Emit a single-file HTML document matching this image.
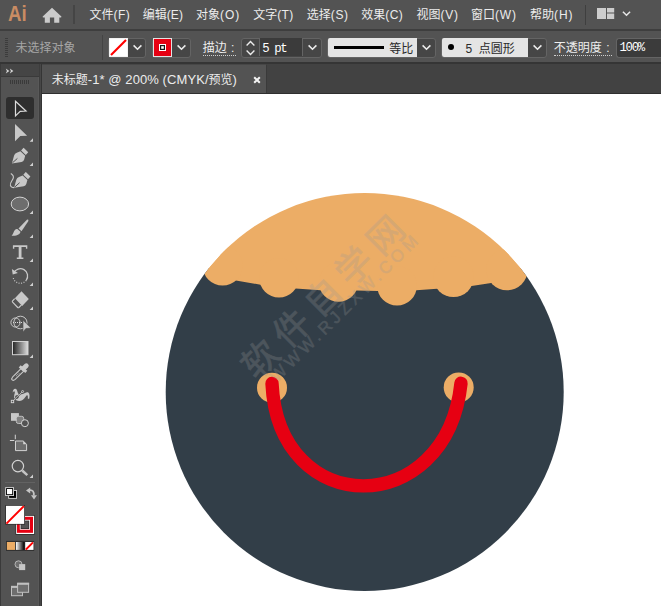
<!DOCTYPE html>
<html><head><meta charset="utf-8"><title>Adobe Illustrator</title>
<style>
html,body{margin:0;padding:0}
body{width:661px;height:606px;overflow:hidden;background:#fff;position:relative;
 font-family:"Liberation Sans","Noto Sans CJK SC",sans-serif;font-size:12px;color:#e4e4e4}
.cj{display:inline-block;font-family:"Liberation Sans","Noto Sans CJK SC",sans-serif;font-size:12px}
.a{position:absolute;white-space:nowrap}
#menubar{position:absolute;left:0;top:0;width:661px;height:29px;background:#535353}
#menubar .mi{position:absolute;top:7px;line-height:16px;white-space:nowrap;color:#ececec}
#sep1{position:absolute;left:0;top:29px;width:661px;height:2px;background:#3e3e3e}
#ctrl{position:absolute;left:0;top:31px;width:661px;height:32px;background:#535353}
#sep2{position:absolute;left:0;top:62px;width:661px;height:2px;background:#353535}
#tabs{position:absolute;left:0;top:64px;width:661px;height:30px;background:#424242}
#tab{position:absolute;left:42px;top:0;width:225px;height:30px;background:#535353;border-right:1px solid #3a3a3a;border-top:1px solid #474747;box-sizing:border-box}
#tools{position:absolute;left:0;top:64px;width:42px;height:542px;background:#535353}
.dd{position:absolute;top:6.5px;height:18px;box-sizing:content-box;border:1px solid #646464;background:#464646;border-radius:3px}
.lbl{position:absolute;top:9px;line-height:16px;color:#eeeeee;white-space:nowrap}
.mono{font-family:"Liberation Mono",monospace}
</style></head><body>

<!-- ===== menu bar ===== -->
<div id="menubar">
 <div class="a" style="left:8px;top:0px;font-weight:bold;font-size:22px;line-height:27px;color:#c98c63;transform:scaleX(0.85);transform-origin:0 0">Ai</div>
 <svg class="a" style="left:40px;top:0" width="24" height="29" viewBox="40 0 24 29"><path fill="#cbcbcb" d="M52 7.7L61.4 16.5Q61.7 17.4 60.6 17.4H59.3V22.8H54.2V17.6H49.9V22.8H44.8V17.4H43.4Q42.4 17.4 42.7 16.5Z"/></svg>
 <div class="a" style="left:73.3px;top:5px;width:1.5px;height:19px;background:#454545"></div>
 <div class="mi" style="left:89.5px"><span class="cj">文件</span><span style="letter-spacing:0.4px">(F)</span></div>
 <div class="mi" style="left:142.7px"><span class="cj">编辑</span><span style="letter-spacing:0.15px">(E)</span></div>
 <div class="mi" style="left:196px"><span class="cj">对象</span><span style="letter-spacing:1.0px">(O)</span></div>
 <div class="mi" style="left:253.2px"><span class="cj">文字</span><span style="letter-spacing:0.4px">(T)</span></div>
 <div class="mi" style="left:306.7px"><span class="cj">选择</span><span style="letter-spacing:0.7px">(S)</span></div>
 <div class="mi" style="left:361.2px"><span class="cj">效果</span><span style="letter-spacing:0.45px">(C)</span></div>
 <div class="mi" style="left:416.6px"><span class="cj">视图</span><span style="letter-spacing:0.7px">(V)</span></div>
 <div class="mi" style="left:471.1px"><span class="cj">窗口</span><span style="letter-spacing:0.75px">(W)</span></div>
 <div class="mi" style="left:530.1px"><span class="cj">帮助</span><span style="letter-spacing:0.9px">(H)</span></div>
 <div class="a" style="left:585px;top:5px;width:1px;height:20px;background:#3f3f3f"></div>
 <svg class="a" style="left:597px;top:8px" width="18" height="11" viewBox="0 0 18 11"><path fill="#cdcdcd" d="M0 0H9V11H0ZM10 0H17.2V4.5H10ZM10 5.6H17.2V11H10Z"/></svg>
 <svg class="a" style="left:621px;top:10px" width="11" height="8" viewBox="0 0 11 8"><path fill="none" stroke="#e6e6e6" stroke-width="1.5" d="M1.9 1.8L5.5 5.3L9.1 1.8"/></svg>
</div>
<div id="sep1"></div>

<!-- ===== control bar ===== -->
<div id="ctrl">
 <svg class="a" style="left:4px;top:7px" width="5" height="19" viewBox="0 0 5 19"><path stroke="#3c3c3c" stroke-width="1" d="M1 .5H4M1 2.5H4M1 4.5H4M1 6.5H4M1 8.5H4M1 10.5H4M1 12.5H4M1 14.5H4M1 16.5H4M1 18.5H4"/></svg>
 <div class="lbl" style="left:15.5px;color:#a6a6a6"><span class="cj">未选择对象</span></div>
 <div class="a" style="left:101.5px;top:4px;width:1px;height:25px;background:#444"></div>

 <!-- fill -->
 <div class="dd" style="left:108px;width:36px"></div>
 <svg class="a" style="left:109px;top:7px" width="19" height="19" viewBox="0 0 19 19"><rect width="19" height="19" fill="#e6e6e6"/><rect x="0.5" y="0.5" width="18" height="18" fill="#fff"/><path stroke="#f00" stroke-width="2.2" d="M2 17L17 2"/></svg>
 <svg class="a" style="left:132px;top:13px" width="11" height="8" viewBox="0 0 11 8"><path fill="none" stroke="#ececec" stroke-width="1.6" d="M1.6 1.4L5.5 5.2L9.4 1.4"/></svg>

 <!-- stroke -->
 <div class="dd" style="left:152px;width:36.5px"></div>
 <svg class="a" style="left:153px;top:7px" width="19" height="19" viewBox="0 0 19 19"><rect width="19" height="19" fill="#e2e2e2"/><rect x="1" y="1" width="17" height="17" fill="#e60012"/><rect x="6" y="6" width="7" height="7" fill="#fff"/><rect x="7" y="7" width="5" height="5" fill="#1a1a1a"/><rect x="8.2" y="8.2" width="2.6" height="2.6" fill="#fff"/></svg>
 <svg class="a" style="left:176px;top:13px" width="11" height="8" viewBox="0 0 11 8"><path fill="none" stroke="#ececec" stroke-width="1.6" d="M1.6 1.4L5.5 5.2L9.4 1.4"/></svg>

 <!-- stroke weight -->
 <div class="lbl" style="left:202.7px;border-bottom:1px dotted #cfcfcf;line-height:14px;top:9.5px"><span class="cj">描边</span>&nbsp;<span style="margin-left:1px;padding-right:2px">:</span></div>
 <div class="dd" style="left:241px;width:79px"></div>
 <div class="a" style="left:259px;top:7px;width:44px;height:18px;background:#3b3b3b;border-left:1px solid #646464;border-right:1px solid #646464;box-sizing:border-box"></div>
 <svg class="a" style="left:245px;top:9px" width="11" height="16" viewBox="0 0 11 16"><path fill="none" stroke="#ececec" stroke-width="1.4" d="M1.6 5.4L5.5 1.6L9.4 5.4M1.6 10.6L5.5 14.4L9.4 10.6"/></svg>
 <div class="a mono" style="left:262.2px;top:9.8px;line-height:16px;font-size:12.3px;color:#fff;letter-spacing:-1.35px">5 pt</div>
 <svg class="a" style="left:307px;top:13px" width="11" height="8" viewBox="0 0 11 8"><path fill="none" stroke="#ececec" stroke-width="1.6" d="M1.6 1.4L5.5 5.2L9.4 1.4"/></svg>

 <!-- profile -->
 <div class="dd" style="left:327px;width:107px"></div>
 <div class="a" style="left:328px;top:7px;width:89px;height:19px;background:#e4e4e4;border-radius:2px 0 0 2px"></div>
 <div class="a" style="left:334px;top:15.3px;width:50px;height:3px;background:#000"></div>
 <div class="a" style="left:389.3px;top:9.5px;line-height:16px;color:#2a2a2a"><span class="cj">等比</span></div>
 <svg class="a" style="left:420.5px;top:13px" width="11" height="8" viewBox="0 0 11 8"><path fill="none" stroke="#ececec" stroke-width="1.6" d="M1.6 1.4L5.5 5.2L9.4 1.4"/></svg>

 <!-- brush -->
 <div class="dd" style="left:441px;width:104px"></div>
 <div class="a" style="left:442px;top:7px;width:86px;height:19px;background:#e4e4e4;border-radius:2px 0 0 2px"></div>
 <div class="a" style="left:448.4px;top:13.4px;width:6px;height:6px;border-radius:50%;background:#000"></div>
 <div class="a" style="left:465.5px;top:9.5px;line-height:16px;color:#2a2a2a">5&nbsp;&nbsp;<span class="cj">点圆形</span></div>
 <svg class="a" style="left:531.5px;top:13px" width="11" height="8" viewBox="0 0 11 8"><path fill="none" stroke="#ececec" stroke-width="1.6" d="M1.6 1.4L5.5 5.2L9.4 1.4"/></svg>

 <!-- opacity -->
 <div class="lbl" style="left:553.8px;border-bottom:1px dotted #cfcfcf;line-height:14px;top:9.5px"><span class="cj">不透明度</span>&nbsp;<span style="margin-left:1px;padding-right:2px">:</span></div>
 <div class="dd" style="left:616px;width:44px;background:#3b3b3b;border-right:0;border-radius:3px 0 0 3px"></div>
 <div class="a mono" style="left:619.4px;top:9px;line-height:16px;font-size:12.3px;color:#fff;letter-spacing:-1.25px">100%</div>
</div>
<div id="sep2"></div>

<!-- ===== tab strip ===== -->
<div id="tabs">
 <div class="a" style="left:42px;top:29px;width:619px;height:1px;background:#2f2f2f;z-index:2"></div>
 <div id="tab">
  <div class="a" style="left:9.8px;top:6.4px;line-height:18px;font-size:13px;letter-spacing:0.08px;color:#ececec"><span class="cj" style="letter-spacing:0">未标题</span>-1* @ 200% (CMYK/<span class="cj" style="letter-spacing:0">预览</span>)</div>
  <svg class="a" style="left:211.3px;top:10.5px" width="8" height="8" viewBox="0 0 8 8"><path stroke="#f4f4f4" stroke-width="2" d="M1.2 1.2L6.8 6.8M6.8 1.2L1.2 6.8"/></svg>
 </div>
</div>

<!-- ===== tools ===== -->
<div id="tools">
 <svg class="a" style="left:0;top:0" width="42" height="542" viewBox="0 64 42 542">
  <rect x="0" y="64" width="1" height="542" fill="#3a3a3a"/>
  <rect x="38" y="77" width="1" height="529" fill="#595959"/><rect x="39" y="64" width="1" height="542" fill="#3d3d3d"/><rect x="40" y="64" width="1" height="542" fill="#474747"/><rect x="41" y="64" width="1" height="542" fill="#353535"/>
  <rect x="1" y="64" width="38" height="12" fill="#454545"/>
  <rect x="1" y="76" width="38" height="1" fill="#3a3a3a"/>
  <path fill="#d6d6d6" d="M5.8 68.4L9.4 70.9L5.8 73.4L6.9 70.9ZM9.8 68.4L13.4 70.9L9.8 73.4L10.9 70.9Z"/>
  <path stroke="#3a3a3a" stroke-width="1" d="M10.5 80V84M12.5 80V84M14.5 80V84M16.5 80V84M18.5 80V84M20.5 80V84M22.5 80V84M24.5 80V84M26.5 80V84M28.5 80V84"/>
  <rect x="6" y="97" width="28" height="22" rx="3" fill="#2e2e2e"/>
  <!--TOOLS-BEGIN-->
<defs><linearGradient id="gt" x1="0" x2="1" y1="0" y2="0"><stop offset="0" stop-color="#222"/><stop offset="1" stop-color="#dedede"/></linearGradient><linearGradient id="gw" x1="0" x2="1" y1="0" y2="0"><stop offset="0" stop-color="#fff"/><stop offset="1" stop-color="#000"/></linearGradient><style>.fl{fill:#d0d0d0}</style></defs>
  <!-- 1 selection -->
  <path d="M15.5 101.3L26 111L20.2 111.3L15.5 115.9Z" fill="#2e2e2e" stroke="#dcdcdc" stroke-width="1.2" stroke-linejoin="miter"/>
  <!-- 2 direct selection -->
  <path d="M15 124L27.1 135.8L20.3 136L15 141.3Z" fill="#c8c8c8"/>
  <path class="fl" d="M33 138.2V141.7H29.6Z"/>
  <!-- 3 pen -->
  <g id="pen" fill="#c8c8c8">
   <path d="M21.1 150.5L23.3 147.9Q23.6 147.6 23.9 147.9L28 151.9Q28.3 152.2 28 152.5L25.8 155Z"/>
   <path d="M11.9 163.4L14.1 155.4Q14.8 153.4 16.8 152.8L20.4 151.2L25.2 155.7L24.1 159.7Q23.4 161.5 21.5 161.9Z"/>
   <path d="M12.4 162.9L17.4 158.4" stroke="#535353" stroke-width="1" fill="none"/>
  </g>
  <path class="fl" d="M33 162.6V166.1H29.6Z"/>
  <!-- 4 curvature -->
  <use href="#pen" x="2.2" y="24.3"/>
  <path d="M10.8 173.4C13.2 174.8 13.9 176.2 13.2 178.2C12.2 181 9.8 183 10.4 185.3C10.9 187 12.6 187.6 14.2 187.6" fill="none" stroke="#c8c8c8" stroke-width="1.1"/>
  <!-- 5 ellipse -->
  <ellipse cx="19.9" cy="204" rx="8.7" ry="6.9" fill="#6d6d6d" stroke="#d2d2d2" stroke-width="1"/>
  <path class="fl" d="M33 210.6V214.1H29.6Z"/>
  <!-- 6 brush -->
  <path fill="#c8c8c8" d="M26.9 219.7Q28.7 219.1 28.4 221L21.5 231.2L18.5 228.5Z"/>
  <path fill="#c8c8c8" d="M17.9 229.4L20.5 231.8C20.2 234.4 17 236.2 11.6 235.7C13.6 234.2 13.4 231.4 14.9 230C15.9 229 17.1 228.9 17.9 229.4Z"/>
  <path class="fl" d="M33 234.5V238H29.6Z"/>
  <!-- 7 type -->
  <path fill="#c8c8c8" d="M12.9 245.3H27.3V248.7H25.9V247H21.5V257.4H23.4V259H16.8V257.4H18.7V247H14.3V248.7H12.9Z"/>
  <path class="fl" d="M33 258.6V262.1H29.6Z"/>
  <!-- 8 rotate -->
  <path d="M13.63 273.03A7.3 7.3 0 1 1 26.2 280.29" fill="none" stroke="#c8c8c8" stroke-width="1.3"/>
  <path d="M26.2 280.29A7.3 7.3 0 0 1 13.25 277.89" fill="none" stroke="#c8c8c8" stroke-width="1.2" stroke-dasharray="1 1.5"/>
  <path fill="#c8c8c8" d="M11.9 269.1L12.7 274.4L17.9 273Z"/>
  <path class="fl" d="M33 282.5V286H29.6Z"/>
  <!-- 9 eraser -->
  <path fill="#c8c8c8" d="M21.5 291.2L28.8 298.9L22.2 306L14.9 298.3Z"/>
  <path fill="none" stroke="#c8c8c8" stroke-width="1.2" stroke-linejoin="round" d="M14.7 298.6L12.6 300.9Q12.1 301.5 12.6 302.1L17.7 307.5Q18.3 308 18.9 307.5L21.5 304.9"/>
  <path class="fl" d="M33 306.6V310.1H29.6Z"/>
  <!-- 10 shape builder -->
  <ellipse cx="20.4" cy="322.5" rx="6.6" ry="6.3" fill="none" stroke="#c8c8c8" stroke-width="1"/>
  <circle cx="15.5" cy="322.5" r="4.6" fill="none" stroke="#c8c8c8" stroke-width="1"/>
  <path d="M13 322.5H22.5" stroke="#dadada" stroke-width="1" stroke-dasharray="1 1"/>
  <path d="M23 320.2L31 328.1L25.9 328.5L23 332Z" fill="#c8c8c8" stroke="#535353" stroke-width="0.6"/>
  <!-- 11 gradient -->
  <rect x="12.5" y="341.5" width="15.5" height="13.2" fill="url(#gt)" stroke="#d2d2d2" stroke-width="1"/>
  <path class="fl" d="M33 354.6V358.1H29.6Z"/>
  <!-- 12 eyedropper -->
  <path d="M23.4 368.5L26.3 365.7" stroke="#c8c8c8" stroke-width="4.8" stroke-linecap="round" fill="none"/><path d="M19.7 366.3L26.3 371.8" stroke="#c8c8c8" stroke-width="3" fill="none"/><path d="M18.2 372.6L19.4 373.8M17 373.8L18.2 375M15.8 375L17 376.2" stroke="#c8c8c8" stroke-width="0.7" fill="none"/>
  <path fill="none" stroke="#c8c8c8" stroke-width="1.1" stroke-linejoin="round" d="M21.3 368.3L12.7 376.8Q11.1 378.6 12.2 379.8Q13.4 381 15.2 379.4L24 370.9"/>
  <!-- 13 puppet warp -->
  <path fill="#c8c8c8" d="M12.8 392.8C12.6 390.6 13.6 388.8 15.2 388.8C16.7 388.8 17.3 391 17.9 392.9C18.3 393.9 19 394.4 20 394.3C21.8 394.2 23.6 393.9 25 393C26.2 392.2 27.4 391.8 28.4 392.6C29.8 393.8 29.8 396.6 29.1 399L27.8 398.6C28 397 27.9 395.6 27.3 395.3C26.4 395 25.4 397.4 24.2 398.6C22.8 400 21.6 400.9 19.5 401C17.4 401.1 15.2 400.2 14.4 398.6C13.8 397.2 14.2 395.6 14.4 394.2C14.9 393.2 15.2 391.5 14.2 391.2C13.5 391.1 13.2 392.1 12.8 392.8Z"/>
  <path d="M12.6 401.5L22.6 391.5" stroke="#535353" stroke-width="1.6"/>
  <path d="M12.6 401.5L22.6 391.5" stroke="#d6d6d6" stroke-width="0.8"/>
  <rect x="11.3" y="400.3" width="2.4" height="2.4" fill="#535353" stroke="#d6d6d6" stroke-width="0.9"/>
  <circle cx="16.9" cy="396.9" r="1.5" fill="#4a4a4a" stroke="#4a4a4a" stroke-width="0.6"/><path d="M15.7 398.1L18.1 395.7" stroke="#d6d6d6" stroke-width="0.8"/>
  <circle cx="22.6" cy="391.5" r="1" fill="#535353" stroke="#d6d6d6" stroke-width="0.8"/>
  <!-- 14 shaper -->
  <rect x="11" y="413.1" width="7.9" height="7.7" fill="#c8c8c8"/>
  <rect x="16.3" y="416.3" width="7.4" height="7.2" rx="2" fill="#808080" stroke="#c8c8c8" stroke-width="0.9"/>
  <circle cx="24.9" cy="423.2" r="3.5" fill="#535353" stroke="#d2d2d2" stroke-width="1"/>
  <!-- 15 artboard -->
  <path d="M15.3 434.7V439.2M9.9 440.5H14.3" stroke="#d2d2d2" stroke-width="1" fill="none"/>
  <path d="M15.5 441H23.2L26.6 444.3V450.6H15.5Z" fill="#6e6e6e" stroke="#d2d2d2" stroke-width="1"/>
  <path d="M23.2 441L26.6 444.3H23.2Z" fill="#d2d2d2"/>
  <!-- 16 zoom -->
  <circle cx="17.9" cy="466.1" r="5.7" fill="none" stroke="#d2d2d2" stroke-width="1.2"/>
  <path d="M22.2 470.5L27.3 475.2" stroke="#c4c4c4" stroke-width="2.4"/>
  <path class="fl" d="M33 474.5V478H29.6Z"/>
  <!-- separator -->
  <rect x="5" y="482" width="30" height="1" fill="#626262"/>
  <!-- default fill/stroke -->
  <rect x="8.2" y="490" width="8.8" height="8.8" fill="#d8d8d8"/><rect x="9.1" y="490.9" width="7" height="7" fill="#000"/>
  <rect x="5.2" y="487.2" width="8.8" height="8.8" fill="#d8d8d8"/><rect x="6.1" y="488.1" width="7" height="7" fill="#000"/><rect x="7" y="489" width="5.2" height="5.2" fill="#fff"/>
  <!-- swap -->
  <path d="M29.2 490.2C32.8 489.6 34.2 492 33.8 495.4" fill="none" stroke="#c4c4c4" stroke-width="1.8"/>
  <path fill="#c4c4c4" d="M26 490.6L30.2 487.4V493.4ZM31 495.2H37L34 499.4Z"/>
  <!-- stroke box -->
  <rect x="15.5" y="515" width="19.2" height="19.7" fill="#2a2a2a"/>
  <rect x="16.2" y="515.8" width="17.9" height="18.2" fill="#fff"/>
  <rect x="17" y="516.8" width="16" height="16" fill="#e60012"/>
  <rect x="19.8" y="519.8" width="10.2" height="9.9" fill="#fff"/>
  <rect x="20.6" y="520.6" width="8.6" height="8.4" fill="#2a2a2a"/>
  <rect x="21.3" y="521.3" width="7.2" height="7" fill="#535353"/>
  <!-- fill box -->
  <rect x="5.3" y="505" width="19.7" height="19.6" fill="#2a2a2a"/>
  <rect x="6" y="505.8" width="18.2" height="18.1" fill="#fff"/>
  <path d="M6.4 523.6L23.9 506.1" stroke="#f00" stroke-width="2"/>
  <!-- color / gradient / none -->
  <rect x="6" y="540.9" width="28.2" height="10" fill="#2f2f2f"/>
  <rect x="6.9" y="542" width="8.1" height="7.9" fill="#ecad66"/>
  <rect x="15.9" y="542" width="8.4" height="7.9" fill="url(#gw)"/>
  <rect x="25.2" y="542" width="8.3" height="7.9" fill="#fff"/>
  <path d="M25.8 549.6L33 542.4" stroke="#f00" stroke-width="2"/>
  <!-- draw mode -->
  <circle cx="18.5" cy="564.3" r="3.5" fill="#6e6e6e" stroke="#bdbdbd" stroke-width="0.9"/>
  <rect x="19.1" y="564.1" width="6.1" height="6" fill="#c6c6c6"/>
  <!-- screen mode -->
  <rect x="11.5" y="586.4" width="11" height="9.3" fill="#6e6e6e" stroke="#c0c0c0" stroke-width="1"/>
  <rect x="11" y="585.9" width="12" height="2" fill="#c0c0c0"/>
  <rect x="17.6" y="583.3" width="11" height="9" fill="#6e6e6e" stroke="#c0c0c0" stroke-width="1"/>
  <rect x="17.1" y="582.8" width="12" height="2" fill="#c0c0c0"/>
<!--TOOLS-END-->
 </svg>
</div>

<!-- ===== artwork ===== -->
<svg class="a" style="left:42px;top:94px" width="619" height="512" viewBox="42 94 619 512">
 <defs><clipPath id="cc"><circle cx="364.7" cy="392" r="199"/></clipPath><clipPath id="cd"><rect x="100" y="268" width="500" height="340"/></clipPath></defs>
 <circle cx="364.7" cy="392" r="199" fill="#323e48" clip-path="url(#cd)"/>
 <g clip-path="url(#cc)" fill="#ecad66">
  <path d="M150 150H580V276.4L526.6 276.4L491.2 283.1L471.6 286L437.1 288.8L416.3 290.2L377.9 290.9L356.3 290.6L320.6 290.2L295.6 288.4L260.6 284.7L235.9 280.6L204.5 274.1H150Z"/>
  <circle cx="222.6" cy="265.6" r="20"/><circle cx="279" cy="277.7" r="19.8"/><circle cx="338.5" cy="282.1" r="19.7"/>
  <circle cx="397" cy="285.8" r="19.8"/><circle cx="453.5" cy="276.8" r="20.3"/><circle cx="507" cy="269.6" r="20.7"/>
 </g>
 <circle cx="272" cy="387.7" r="15" fill="#ecad66"/>
 <circle cx="458.7" cy="387.4" r="15" fill="#ecad66"/>
 <path fill="none" stroke="#e60012" stroke-width="13.4" stroke-linecap="round" d="M272 383.5C278.5 520 446.5 520 461 383.3"/>
 <g opacity="0.25" fill="#999" stroke="#999" transform="translate(256.6,380.9) rotate(-44.7)">
  <text x="0" y="0" stroke-width="0.7" font-family="Liberation Sans, Noto Sans CJK SC, sans-serif" font-size="36" letter-spacing="8">软件自学网</text>
  <text x="12.9" y="15.8" stroke-width="0.5" font-family="Liberation Sans, sans-serif" font-size="17" letter-spacing="3.83">WWW.RJZXW.COM</text>
 </g>
</svg>
</body></html>
